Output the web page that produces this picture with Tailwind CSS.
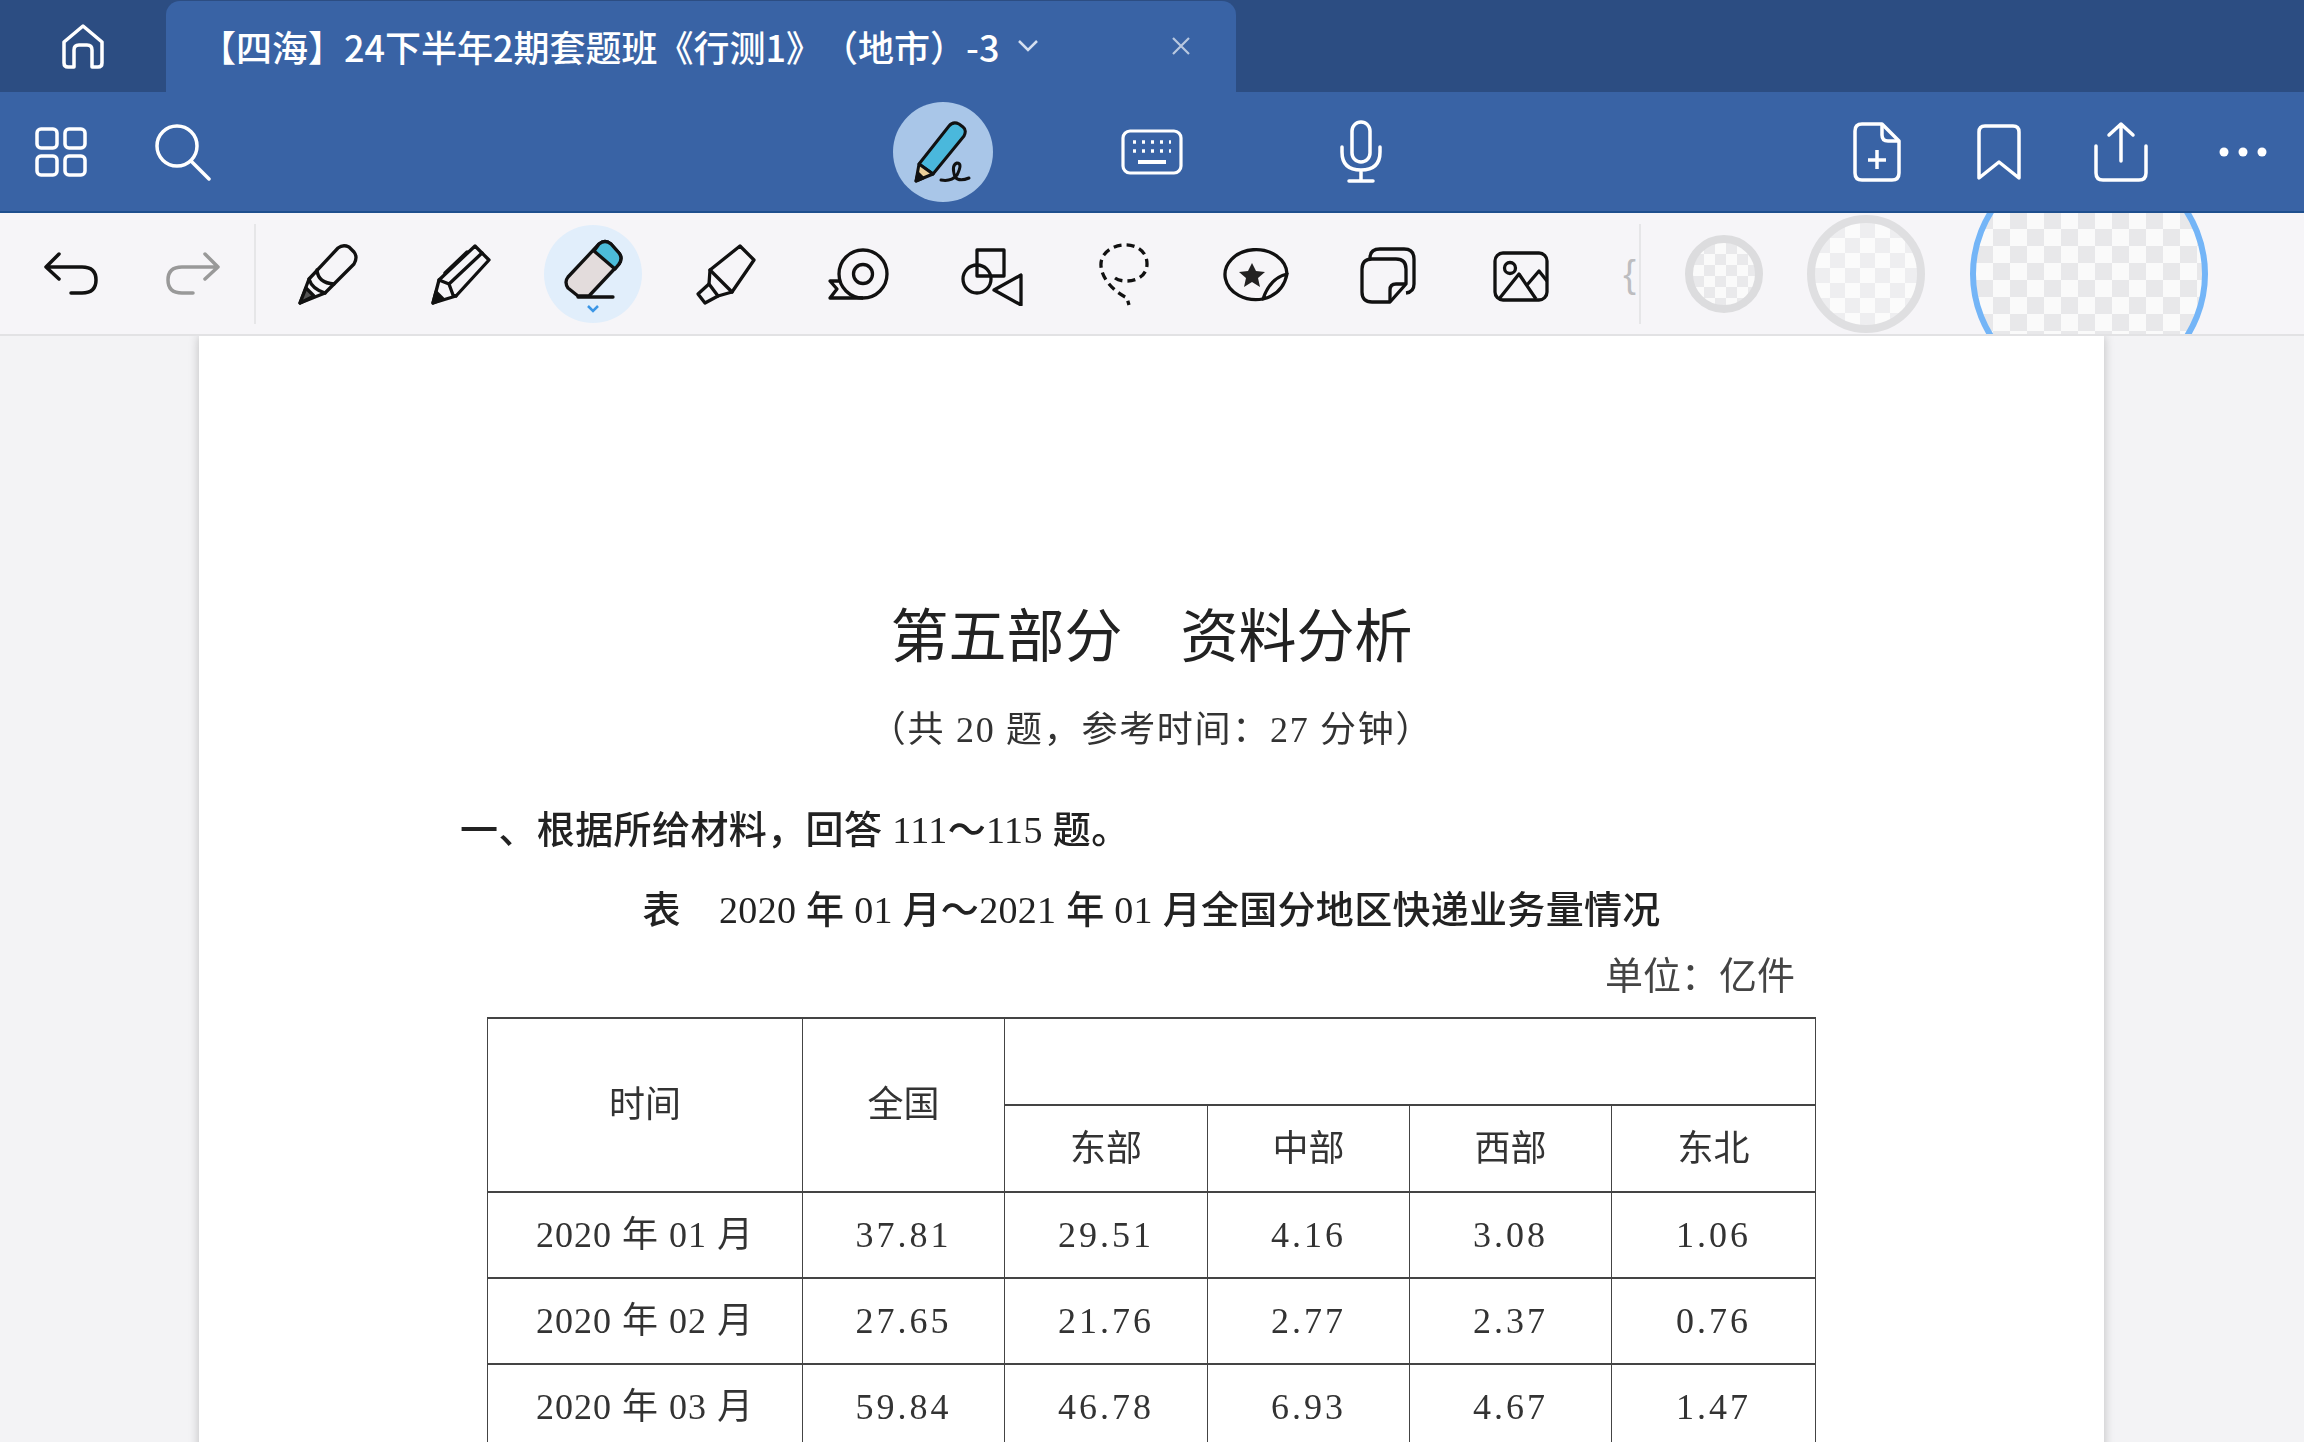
<!DOCTYPE html>
<html lang="zh-CN">
<head>
    <meta charset="UTF-8">
    <title>行测1</title>
    <script src="https://cdn.jsdelivr.net/npm/@tailwindcss/browser@4"></script>
</head>
<body class="w-[2304px] h-[1442px] overflow-hidden flex flex-col bg-[#f3f3f5] blur-[0.5px] font-['Noto_Sans_CJK_SC',sans-serif]">
    <!-- tab bar -->
    <div class="h-[92px] shrink-0 flex bg-[#2c4d82] text-white">
        <div class="w-[166px] flex items-center justify-center">
            <svg width="48" height="48" viewBox="0 0 48 48" fill="none" stroke="white" stroke-width="3.5" stroke-linejoin="round" stroke-linecap="round"><path d="M5 20 L24 4 L43 20 V41 Q43 45 39 45 H33 V28 Q33 23 28 23 H20 Q15 23 15 28 V45 H9 Q5 45 5 41 Z"/></svg>
        </div>
        <div class="w-[1070px] h-[91px] mt-[1px] rounded-t-[14px] bg-[#3963a5] flex items-center pl-[34px] pb-[2px]">
            <span class="w-[816px] text-[36px] leading-none font-medium whitespace-nowrap [text-spacing-trim:space-all]">【四海】24下半年2期套题班《行测1》（地市）-3</span>
            <svg width="24" height="16" viewBox="0 0 24 16" fill="none" stroke="#d5e0f0" stroke-width="2.5"><path d="M3 3 L12 12 L21 3"/></svg>
            <svg class="ml-[131px]" width="20" height="20" viewBox="0 0 20 20" fill="none" stroke="#b9c8e0" stroke-width="2.2"><path d="M2 2 L18 18 M18 2 L2 18"/></svg>
        </div>
    </div>

    <!-- main toolbar -->
    <div class="h-[121px] shrink-0 pt-[1px] flex items-center justify-between bg-[#3963a5] border-b-2 border-[#1e4f8e]">
        <div class="w-[488px] flex items-center">
            <div class="w-[122px] flex justify-center">
                <svg width="52" height="52" viewBox="0 0 52 52" fill="none" stroke="white" stroke-width="3.5"><rect x="2" y="3" width="20" height="19" rx="4"/><rect x="30" y="3" width="20" height="19" rx="4"/><rect x="2" y="30" width="20" height="19" rx="4"/><rect x="30" y="30" width="20" height="19" rx="4"/></svg>
            </div>
            <div class="w-[122px] flex justify-center">
                <svg width="58" height="58" viewBox="0 0 58 58" fill="none" stroke="white" stroke-width="3.5" stroke-linecap="round"><circle cx="23" cy="23" r="20"/><path d="M37 38 L55 56"/></svg>
            </div>
        </div>
        <div class="flex items-center">
            <div class="w-[209px] flex justify-center">
                <div class="w-[100px] h-[100px] rounded-full bg-[#a9c6e8] flex items-center justify-center">
                    <svg width="64" height="64" viewBox="0 0 64 64" fill="none" stroke="#111" stroke-width="3" stroke-linejoin="round" stroke-linecap="round"><path d="M8 44 L38 6 Q42 1 48 4 L52 7 Q56 10 53 16 L22 54 Z" fill="#4ab8dc"/><path d="M8 44 L5 61 L22 54 Z" fill="#ecd09a"/><path d="M5 61 L7 53 L12 58 Z" fill="#111"/><path d="M30 60 Q40 62 46 55 Q52 43 46 43 Q40 45 44 57 Q48 62 58 58"/></svg>
                </div>
            </div>
            <div class="w-[209px] flex justify-center">
                <svg width="62" height="46" viewBox="0 0 62 46" fill="none" stroke="white" stroke-width="3.2"><rect x="2" y="2" width="58" height="42" rx="7"/><path d="M12 13 H50 M12 22 H50" stroke-width="3.5" stroke-dasharray="3 6"/><path d="M17 33 H45" stroke-width="4"/></svg>
            </div>
            <div class="w-[209px] flex justify-center">
                <svg width="44" height="64" viewBox="0 0 44 64" fill="none" stroke="white" stroke-width="3.5" stroke-linecap="round"><rect x="13" y="2" width="18" height="40" rx="9"/><path d="M3 27 V32 Q3 50 22 50 Q41 50 41 32 V27 M22 50 V60 M10 61 H34"/></svg>
            </div>
        </div>
        <div class="w-[488px] flex items-center">
            <div class="w-[122px] flex justify-center">
                <svg width="50" height="62" viewBox="0 0 50 62" fill="none" stroke="white" stroke-width="3.5" stroke-linejoin="round"><path d="M10 3 H30 L47 20 V52 Q47 59 40 59 H10 Q3 59 3 52 V10 Q3 3 10 3 Z"/><path d="M30 3 V14 Q30 20 36 20 H47"/><path d="M25 29 V48 M16 39 H34"/></svg>
            </div>
            <div class="w-[122px] flex justify-center">
                <svg width="46" height="58" viewBox="0 0 46 58" fill="none" stroke="white" stroke-width="3.5" stroke-linejoin="round"><path d="M3 55 V9 Q3 3 9 3 H37 Q43 3 43 9 V55 L23 39 Z"/></svg>
            </div>
            <div class="w-[122px] flex justify-center">
                <svg width="56" height="62" viewBox="0 0 56 62" fill="none" stroke="white" stroke-width="3.5" stroke-linecap="round" stroke-linejoin="round"><path d="M28 40 V3 M16 14 L28 3 L40 14"/><path d="M3 25 V52 Q3 59 10 59 H46 Q53 59 53 52 V25"/></svg>
            </div>
            <div class="w-[122px] flex justify-center">
                <svg width="50" height="10" viewBox="0 0 50 10" fill="white"><circle cx="6" cy="5" r="4.5"/><circle cx="25" cy="5" r="4.5"/><circle cx="44" cy="5" r="4.5"/></svg>
            </div>
        </div>
    </div>

    <!-- tool strip -->
    <div class="h-[123px] shrink-0 flex items-center overflow-hidden bg-[#f6f5f8] border-b-2 border-[#e2e2e4]">
        <div class="w-[12px] shrink-0"></div>
        <div class="w-[120px] shrink-0 flex justify-center">
            <svg width="56" height="44" viewBox="0 0 56 44" fill="none" stroke="#111" stroke-width="3.5" stroke-linecap="round" stroke-linejoin="round"><path d="M15 2 L2 15 L15 27 M2 15 H38 Q52 15 52 28 Q52 41 38 41 H27"/></svg>
        </div>
        <div class="w-[120px] shrink-0 flex justify-center">
            <svg width="56" height="44" viewBox="0 0 56 44" fill="none" stroke="#999" stroke-width="3.5" stroke-linecap="round" stroke-linejoin="round"><path d="M41 2 L54 15 L41 27 M54 15 H18 Q4 15 4 28 Q4 41 18 41 H29"/></svg>
        </div>
        <div class="w-[2px] h-[100px] ml-[2px] mr-[6px] shrink-0 bg-[#e6e6e8]"></div>

        <div class="w-[132px] shrink-0 flex justify-center">
            <svg width="64" height="64" viewBox="0 0 64 64" fill="none" stroke="#111" stroke-width="3.3" stroke-linejoin="round" stroke-linecap="round"><path d="M4 61 L13 37 L42 6 Q47 2 53 5 L58 10 Q62 15 58 22 L29 51 Z"/><path d="M21 28 Q22 41 38 42"/><path d="M13 37 Q16 47 29 51"/><path d="M4 61 L10 46 L18 54 Z" fill="#555"/></svg>
        </div>
        <div class="w-[133px] shrink-0 flex justify-center">
            <svg width="64" height="64" viewBox="0 0 64 64" fill="none" stroke="#111" stroke-width="3.3" stroke-linejoin="round" stroke-linecap="round"><path d="M4 61 L10 38 L46 4 L60 18 L27 54 Z"/><path d="M10 38 L20 42 L24 53 M20 42 L53 11 M16 31 L38 10 M24 53 L27 54"/><path d="M4 61 L7 50 L14 57 Z" fill="#111"/></svg>
        </div>
        <div class="w-[132px] shrink-0 flex justify-center">
            <div class="w-[98px] h-[98px] rounded-full bg-[#e1eefb] flex flex-col items-center pt-[14px]">
                <svg width="64" height="64" viewBox="0 0 64 64" fill="none" stroke="#111" stroke-width="3.3" stroke-linejoin="round" stroke-linecap="round"><path d="M7 38 L38 5 Q44 0 50 5 L58 14 Q62 19 58 25 L28 57 H17 L7 49 Q3 43 7 38 Z" fill="#e3dcdc"/><path d="M33 12 L38 5 Q44 0 50 5 L58 14 Q62 19 58 25 L54 30 Z" fill="#4cbcd9"/><path d="M17 58 H52"/></svg>
                <svg class="mt-[2px]" width="14" height="8" viewBox="0 0 14 8" fill="none" stroke="#3b96e6" stroke-width="2.5"><path d="M2 1 L7 6 L12 1"/></svg>
            </div>
        </div>
        <div class="w-[133px] shrink-0 flex justify-center">
            <svg width="64" height="64" viewBox="0 0 64 64" fill="none" stroke="#111" stroke-width="3.3" stroke-linejoin="round" stroke-linecap="round"><path d="M16 28 L46 4 L60 18 L38 50 L24 54 L15 42 Z"/><path d="M15 42 L4 52 L11 61 L24 54"/><path d="M16 28 L38 50"/></svg>
        </div>
        <div class="w-[132px] shrink-0 flex justify-center">
            <svg width="64" height="64" viewBox="0 0 64 64" fill="none" stroke="#111" stroke-width="3.3" stroke-linejoin="round"><circle cx="37" cy="32" r="24"/><circle cx="37" cy="32" r="9.5"/><path d="M37 56 H4 L11 47 L4 39 H15"/></svg>
        </div>
        <div class="w-[133px] shrink-0 flex justify-center">
            <svg width="64" height="64" viewBox="0 0 64 64" fill="none" stroke="#111" stroke-width="3.3" stroke-linejoin="round"><rect x="18" y="8" width="27" height="26"/><circle cx="18" cy="37" r="14"/><path d="M35 48 L62 33 V63 Z"/></svg>
        </div>
        <div class="w-[132px] shrink-0 flex justify-center">
            <svg width="64" height="64" viewBox="0 0 64 64" fill="none" stroke="#111" stroke-width="3.3" stroke-dasharray="8 5"><path d="M24 36 C32 42 56 40 56 22 C56 8 44 2 32 3 C20 4 9 12 10 24 C11 38 24 50 36 56 L38 63"/></svg>
        </div>
        <div class="w-[133px] shrink-0 flex justify-center">
            <svg width="66" height="64" viewBox="0 0 66 64" fill="none" stroke="#111" stroke-width="3.3" stroke-linejoin="round"><path d="M40 57 A31 25 0 1 1 64 32"/><path d="M64 32 Q47 36 40 57 Q60 52 64 32 Z"/><path d="M29 21 L33 29 L42 30 L35 36 L37 45 L29 40 L21 45 L23 36 L16 30 L25 29 Z" fill="#222" stroke="none"/></svg>
        </div>
        <div class="w-[132px] shrink-0 flex justify-center">
            <svg width="64" height="64" viewBox="0 0 64 64" fill="none" stroke="#111" stroke-width="3.3" stroke-linejoin="round"><path d="M14 16 Q14 7 24 7 H48 Q58 7 58 17 V42 Q58 50 50 51"/><path d="M16 17 H40 Q50 17 50 27 V42 L34 60 H16 Q6 60 6 50 V27 Q6 17 16 17 Z"/><path d="M50 42 H40 Q34 42 34 48 V60"/></svg>
        </div>
        <div class="w-[133px] shrink-0 flex justify-center">
            <svg width="64" height="64" viewBox="0 0 64 64" fill="none" stroke="#111" stroke-width="3.3" stroke-linejoin="round"><rect x="6" y="11" width="52" height="47" rx="8"/><circle cx="21" cy="26" r="5.5"/><path d="M10 57 L30 32 L47 57 M38 43 L50 29 L58 39"/></svg>
        </div>
        <div class="w-[52px] pr-[3px] shrink-0 text-[#bdbdc0] text-[38px] leading-none text-right font-['Liberation_Sans',sans-serif]">{</div>
        <div class="w-[2px] h-[100px] shrink-0 bg-[#e6e6e8]"></div>

        <div class="w-[78px] h-[78px] ml-[44px] shrink-0 rounded-full border-[8px] border-[#dcdcde] bg-[repeating-conic-gradient(#e9e9eb_0_25%,#fafafa_0_50%)] bg-size-[22px_22px]"></div>
        <div class="w-[118px] h-[118px] ml-[44px] shrink-0 rounded-full border-[8px] border-[#dfdfe1] bg-[repeating-conic-gradient(#eeeef0_0_25%,#fbfbfb_0_50%)] bg-size-[30px_30px]"></div>
        <div class="w-[238px] h-[238px] ml-[45px] shrink-0 rounded-full border-[6px] border-[#74b5f7] bg-[repeating-conic-gradient(#e8e8ea_0_25%,#fafafa_0_50%)] bg-size-[34px_34px]"></div>
    </div>

    <!-- document -->
    <div class="flex-1 overflow-hidden pl-[199px]">
        <div class="w-[1905px] h-[1200px] bg-white shadow-[0_0_10px_rgba(0,0,0,0.22)] pt-[267px] text-[#222] font-['Liberation_Serif','Noto_Sans_CJK_SC',serif] [text-spacing-trim:space-all]">
            <h1 class="h-[70px] leading-[70px] text-center text-[58px] font-normal">第五部分　资料分析</h1>
            <p class="mt-[32px] h-[50px] leading-[50px] text-center text-[36px] tracking-[1.7px] text-[#333]">（共 20 题，参考时间：27 分钟）</p>
            <p class="mt-[50px] pl-[261px] h-[50px] leading-[50px] text-[38px] tracking-[0.4px] font-medium">一、根据所给材料，回答 111～115 题。</p>
            <p class="mt-[30px] h-[50px] leading-[50px] text-center text-[38px] tracking-[0.3px] font-medium">表　2020 年 01 月～2021 年 01 月全国分地区快递业务量情况</p>
            <p class="mt-[16px] pr-[309px] h-[50px] leading-[50px] text-right text-[38px] text-[#444]">单位：亿件</p>

            <table class="mt-[16px] ml-[288px] w-[1328px] table-fixed border-collapse text-[36px] text-center text-[#333]">
                <colgroup>
                    <col class="w-[315px]">
                    <col class="w-[202px]">
                    <col class="w-[203px]">
                    <col class="w-[202px]">
                    <col class="w-[202px]">
                    <col class="w-[204px]">
                </colgroup>
                <tbody>
                    <tr class="h-[87px]">
                        <td rowspan="2" class="border-x border-y-2 border-[#444]">时间</td>
                        <td rowspan="2" class="border-x border-y-2 border-[#444]">全国</td>
                        <td colspan="4" class="border-x border-y-2 border-[#444]"></td>
                    </tr>
                    <tr class="h-[87px]">
                        <td class="border-x border-y-2 border-[#444]">东部</td>
                        <td class="border-x border-y-2 border-[#444]">中部</td>
                        <td class="border-x border-y-2 border-[#444]">西部</td>
                        <td class="border-x border-y-2 border-[#444]">东北</td>
                    </tr>
                    <tr class="h-[86px] tracking-[3px]">
                        <td class="border-x border-y-2 border-[#444] tracking-[1px]">2020 年 01 月</td>
                        <td class="border-x border-y-2 border-[#444]">37.81</td>
                        <td class="border-x border-y-2 border-[#444]">29.51</td>
                        <td class="border-x border-y-2 border-[#444]">4.16</td>
                        <td class="border-x border-y-2 border-[#444]">3.08</td>
                        <td class="border-x border-y-2 border-[#444]">1.06</td>
                    </tr>
                    <tr class="h-[86px] tracking-[3px]">
                        <td class="border-x border-y-2 border-[#444] tracking-[1px]">2020 年 02 月</td>
                        <td class="border-x border-y-2 border-[#444]">27.65</td>
                        <td class="border-x border-y-2 border-[#444]">21.76</td>
                        <td class="border-x border-y-2 border-[#444]">2.77</td>
                        <td class="border-x border-y-2 border-[#444]">2.37</td>
                        <td class="border-x border-y-2 border-[#444]">0.76</td>
                    </tr>
                    <tr class="h-[86px] tracking-[3px]">
                        <td class="border-x border-y-2 border-[#444] tracking-[1px]">2020 年 03 月</td>
                        <td class="border-x border-y-2 border-[#444]">59.84</td>
                        <td class="border-x border-y-2 border-[#444]">46.78</td>
                        <td class="border-x border-y-2 border-[#444]">6.93</td>
                        <td class="border-x border-y-2 border-[#444]">4.67</td>
                        <td class="border-x border-y-2 border-[#444]">1.47</td>
                    </tr>
                </tbody>
            </table>
        </div>
    </div>
</body>
</html>
